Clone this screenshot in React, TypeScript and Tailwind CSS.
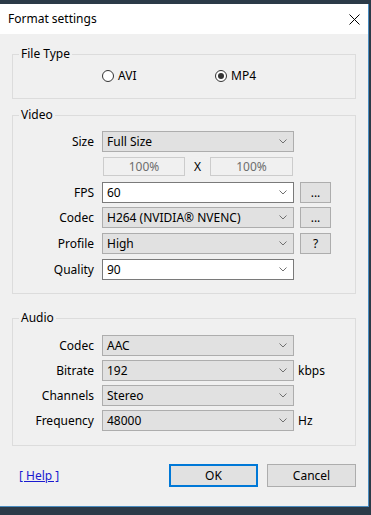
import React from "react";

const font = { fontFamily: '"Segoe UI", "Noto Sans", sans-serif' };

function Chevron() {
  return (
    <svg width="8" height="5" viewBox="0 0 8 5" className="shrink-0">
      <polyline points="0.5,0.5 4,4 7.5,0.5" fill="none" stroke="#707070" strokeWidth="1" />
    </svg>
  );
}

function Select({ value, white }: { value: string; white?: boolean }) {
  return (
    <div
      className={
        "w-[192px] h-[21px] flex items-center justify-between pl-[4px] pr-[6px] border " +
        (white ? "bg-white border-[#7a7a7a]" : "bg-[#e1e1e1] border-[#adadad]")
      }
    >
      <span className="text-[12px] text-black leading-none">{value}</span>
      <Chevron />
    </div>
  );
}

function SmallButton({ label }: { label: string }) {
  return (
    <div className="w-[31px] h-[21px] ml-[6px] flex items-center justify-center bg-[#e1e1e1] border border-[#adadad] text-[12px] leading-none text-black">
      {label}
    </div>
  );
}

function Row({
  label,
  children,
  className = "",
}: {
  label: string;
  children?: React.ReactNode;
  className?: string;
}) {
  return (
    <div className={"flex items-center h-[21px] " + className}>
      <span className="w-[81px] text-right text-[12px] text-black leading-none">{label}</span>
      <div className="ml-[8px] flex items-center">{children}</div>
    </div>
  );
}

function Group({ title, children, className = "" }: { title: string; children: React.ReactNode; className?: string }) {
  return (
    <fieldset className={"border border-[#dcdcdc] " + className}>
      <legend className="ml-[6px] px-[2px] text-[12px] leading-[16px] text-black">{title}</legend>
      {children}
    </fieldset>
  );
}

function Radio({ label, checked }: { label: string; checked?: boolean }) {
  return (
    <div className="flex items-center gap-[4px]">
      <span className="w-[12px] h-[12px] rounded-full border border-[#333333] bg-white flex items-center justify-center">
        {checked && <span className="w-[6px] h-[6px] rounded-full bg-[#333333]" />}
      </span>
      <span className="text-[12px] leading-none text-black">{label}</span>
    </div>
  );
}

export default function App() {
  return (
    <div className="w-[371px] h-[515px] bg-[#2b3a48] pt-[4px]" style={font}>
      <div className="w-[369px] h-[503px] bg-[#f0f0f0] border-r border-b border-[#4a8cc0] flex flex-col">
        {/* title bar */}
        <div className="h-[30px] bg-white flex items-center justify-between pl-[8px] pr-[8px]">
          <span className="text-[12px] text-black">Format settings</span>
          <svg width="11" height="11" viewBox="0 0 11 11">
            <line x1="0.5" y1="0.5" x2="10.5" y2="10.5" stroke="#000" strokeWidth="1" />
            <line x1="10.5" y1="0.5" x2="0.5" y2="10.5" stroke="#000" strokeWidth="1" />
          </svg>
        </div>

        <div className="px-[12px] pt-[12px] flex flex-col">
          <Group title="File Type">
            <div className="flex items-center h-[16px] mt-[6px] mb-[14px] pl-[89px]">
              <div className="w-[113px]">
                <Radio label="AVI" />
              </div>
              <Radio label="MP4" checked />
            </div>
          </Group>

          <Group title="Video" className="mt-[8px]">
            <div className="flex flex-col pt-[8px] pb-[13px]">
              <Row label="Size">
                <Select value="Full Size" />
              </Row>
              <div className="flex items-center h-[19px] mt-[5px] pl-[90px]">
                <div className="w-[82px] h-[19px] border border-[#cccccc] flex items-center justify-center text-[12px] leading-none text-[#6d6d6d]">
                  100%
                </div>
                <span className="w-[25px] text-center text-[12px] leading-none text-black">X</span>
                <div className="w-[83px] h-[19px] border border-[#cccccc] flex items-center justify-center text-[12px] leading-none text-[#6d6d6d]">
                  100%
                </div>
              </div>
              <Row label="FPS" className="mt-[6px]">
                <Select value="60" white />
                <SmallButton label="..." />
              </Row>
              <Row label="Codec" className="mt-[4px]">
                <Select value="H264 (NVIDIA® NVENC)" />
                <SmallButton label="..." />
              </Row>
              <Row label="Profile" className="mt-[5px]">
                <Select value="High" />
                <SmallButton label="?" />
              </Row>
              <Row label="Quality" className="mt-[5px]">
                <Select value="90" white />
              </Row>
            </div>
          </Group>

          <Group title="Audio" className="mt-[16px]">
            <div className="flex flex-col gap-[4px] pt-[9px] pb-[14px]">
              <Row label="Codec">
                <Select value="AAC" />
              </Row>
              <Row label="Bitrate">
                <Select value="192" />
                <span className="ml-[4px] text-[12px] leading-none text-black">kbps</span>
              </Row>
              <Row label="Channels">
                <Select value="Stereo" />
              </Row>
              <Row label="Frequency">
                <Select value="48000" />
                <span className="ml-[4px] text-[12px] leading-none text-black">Hz</span>
              </Row>
            </div>
          </Group>

          <div className="flex items-center mt-[18px] h-[23px]">
            <span className="ml-[7px] text-[12px] leading-none text-[#1a1ad0] underline">[ Help ]</span>
            <div className="flex-1" />
            <div className="w-[89px] h-[23px] flex items-center justify-center bg-[#e1e1e1] border-2 border-[#0078d7] text-[12px] leading-none text-black">
              OK
            </div>
            <div className="w-[89px] h-[23px] ml-[9px] flex items-center justify-center bg-[#e1e1e1] border border-[#adadad] text-[12px] leading-none text-black">
              Cancel
            </div>
          </div>
        </div>
      </div>
    </div>
  );
}
